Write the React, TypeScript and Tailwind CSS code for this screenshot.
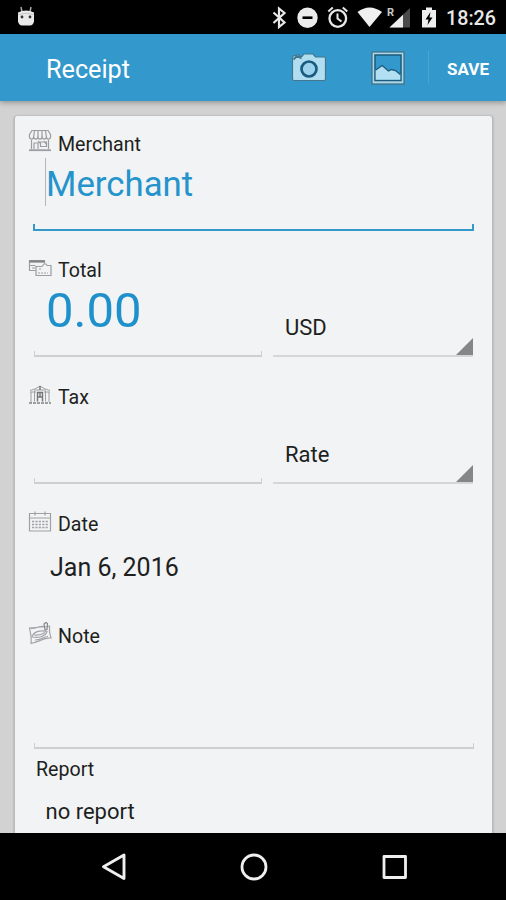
import { ReactNode } from "react";

function StoreIcon() {
  return (
    <svg className="h-6 w-6" viewBox="0 0 24 24" fill="none" stroke="#9b9d9e" strokeWidth="1.2">
      <path d="M4 1.500h16l2.500 4v3a2.200 2.200 0 0 1-4.200 0 2.200 2.200 0 0 1-4.200 0 2.200 2.200 0 0 1-4.200 0 2.200 2.200 0 0 1-4.200 0 2.200 2.200 0 0 1-4.200 0v-3z" />
      <path d="M6.500 2l-1 6.500M10 2v6.500M14 2v6.500M17.500 2l1 6.500M3.500 11v9M20.500 11v9M6 20v-6h4v6M12.500 17.500v-4.500h6v4.500zM10 12l3 3M16 12l2 3" />
      <path d="M1 21.200h22" strokeWidth="1.800" />
    </svg>
  );
}

function CardsIcon() {
  return (
    <svg className="h-6 w-6" viewBox="0 0 24 24" fill="none" stroke="#9c9ea0" strokeWidth="1.200">
      <path d="M7.500 15.500h-6v-10h15v3" />
      <path d="M1.500 6.500h15" stroke="#808283" strokeWidth="2.200" />
      <path d="M1.500 10.500h6M4 13h3" />
      <path d="M8 11.500h6l2-2.500h2l1 1.500h4v10h-15z" />
      <path d="M10 18h10M11 14h3" strokeDasharray="2 1" />
    </svg>
  );
}

function BankIcon() {
  return (
    <svg className="h-6 w-6" viewBox="0 0 24 24" fill="none" stroke="#9c9ea0" strokeWidth="1">
      <path d="M2 8.500l5-1.500 5-3 5 3 5 1.500M2 10h6M16 10h6M3 10v10M6.500 8.500v11M17.500 8.500v11M21 10v10M7 8h10" />
      <path d="M12 4v4M9.500 19.500v-9h5v9M12 10.500v4M9.500 15h5" stroke="#737576" strokeWidth="1.400" />
      <path d="M1 21h22" stroke="#808283" strokeWidth="1.600" strokeDasharray="3 1" />
    </svg>
  );
}

function CalendarIcon() {
  return (
    <svg className="h-6 w-6" viewBox="0 0 24 24" fill="none" stroke="#9fa1a3" strokeWidth="1.200">
      <path d="M1.500 4.500h21v17.500h-21zM1.500 9h21M7 2.500v4M17 2.500v4" />
      <path d="M4 12.500h16M4 15.500h16M4 18.500h16" strokeWidth="1.500" strokeDasharray="2.200 1.200" />
    </svg>
  );
}

function NoteIcon() {
  return (
    <svg className="h-6 w-6" viewBox="0 0 24 24" fill="none" stroke="#a3a5a7" strokeWidth="1.200">
      <path d="M1.500 7c5 1.500 9-2 14-1.500M19.500 5.500l2-.5c-.5 5 0 8 1.500 12-7-.5-12 4-20 5.500 1-5-.5-10-1.500-15.500z" />
      <path d="M4 16c1-5 8-7.500 15-5.500-1.500 4.500-8 7-15 5.500zM6 14c4 .5 8-.5 11-2.500M7 19c5 0 9-3 13-3.500" />
      <path d="M16 3l2-1.500 1.500 1-.5 6-2 .5z" stroke="#858789" />
    </svg>
  );
}

function FieldLabel({ icon, children }: { icon: ReactNode; children: ReactNode }) {
  return (
    <div className="flex h-[31px] gap-[6px] pl-[13px]">
      {icon}
      <span className="text-[19.600px] leading-[31px]">{children}</span>
    </div>
  );
}

function Spinner({ value }: { value: string }) {
  return (
    <div className="flex h-[71px] w-[200px] flex-col justify-end">
      <div className="flex items-end justify-between border-b-2 border-[#d4d6d8]">
        <span className="pb-[9px] pl-3 text-[22px] leading-[36px]">{value}</span>
        <svg className="h-[17px] w-[17px]" viewBox="0 0 17 17">
          <path d="M17 0v17H0z" fill="#858687" />
        </svg>
      </div>
    </div>
  );
}

// flat underline with a short tick going up at both ends
function Underline({ active = false }: { active?: boolean }) {
  return (
    <div
      className={
        active
          ? "h-[7px] border-x-2 border-b-2 border-[#3498c8]"
          : "h-[6px] border-x border-b-2 border-[#cdcfd1]"
      }
    />
  );
}

function StatusBar() {
  return (
    <div className="flex h-[34px] shrink-0 items-center justify-between bg-black pl-[17px] pr-[10px]">
      <svg className="-mt-[3px] h-[22px] w-[18px]" viewBox="0 0 18 22">
        <path d="M4 2l1 5M14 2l-1 5" stroke="#aaa" strokeWidth="1.500" />
        <path d="M1 7.500q8-4 16 0v9q-1 4-4 4H5q-3 0-4-4z" fill="#e9e9e9" />
        <path d="M1 9.500q8-2.500 16 0" stroke="#c5c5c5" fill="none" />
        <circle cx="5" cy="12" r="1.400" fill="#333" />
        <circle cx="13" cy="12" r="1.400" fill="#333" />
      </svg>
      <div className="flex items-center text-white">
        <svg className="h-[24px] w-[166px]" viewBox="0 0 166 24">
          <path d="M2.500 7.500l11 10-5.500 4.500V3.500l5.500 4.500-11 10" fill="none" stroke="#e8e8e8" strokeWidth="2.200" />
          <circle cx="36.500" cy="12.700" r="10.200" fill="#ececec" />
          <path d="M31.500 12.700h10" stroke="#000" strokeWidth="2.600" />
          <circle cx="66.800" cy="13.500" r="8.300" fill="none" stroke="#e8e8e8" strokeWidth="2.300" />
          <path d="M66.500 8.500v5l4 3M57.300 6.500l4.500-4M76.300 6.500l-4.500-4" fill="none" stroke="#e8e8e8" strokeWidth="2" />
          <path d="M86.500 7q12-9 24.500 0L98.500 22z" fill="#f0f0f0" />
          <path d="M139 3L118.500 22.500H139z" fill="#4b4b4b" />
          <path d="M132 9.700L118.500 22.500H132z" fill="#ededed" />
          <path d="M151 5h4V2.500h6V5h4v17.500h-14z" fill="#efefef" />
          <path d="M159.500 7l-5 7.500h3l-1 5.500 5-7.500h-3z" fill="#000" />
          <text x="116" y="10.800" fill="#c8c8c8" fontFamily="Roboto" fontWeight="700" fontSize="11">R</text>
        </svg>
        <span className="ml-[9px] pt-[3px] text-[19.700px] font-medium leading-6 text-[#e8e8e8]">18:26</span>
      </div>
    </div>
  );
}

function ActionBar() {
  return (
    <header className="z-10 flex h-[67px] shrink-0 items-center bg-[#3399cc] pl-[46px] text-white shadow-[0_2px_5px_rgba(0,0,0,0.28)]">
      <h1 className="flex-1 pt-[4px] text-[25.200px] leading-8">Receipt</h1>
      <svg className="h-[32px] w-[38px]" viewBox="0 0 38 32">
        <path
          d="M2.500 6.500L3 4l6-1 1 1.500h2L14 2h9l2.500 3H34q1.500 0 1.500 1.500V27q0 1.500-1.500 1.500H4Q2.500 28.500 2.500 27z"
          fill="#b1ddf1"
          stroke="#43768d"
          strokeWidth="1.200"
        />
        <path d="M3.500 7.500l2.500-2.500h3l2.500 1.500" fill="none" stroke="#43768d" strokeWidth="1.800" />
        <circle cx="19" cy="17" r="7.500" fill="#9bd2ed" stroke="#195c80" strokeWidth="2.700" />
      </svg>
      <svg className="ml-[42px] h-[36px] w-[36px]" viewBox="0 0 36 36">
        <rect x="2" y="2" width="32" height="32" fill="#a9d6e9" stroke="#416c80" strokeWidth="1.200" />
        <rect x="5" y="5" width="26" height="25.500" fill="#3399cc" stroke="#1c597a" strokeWidth="1.500" />
        <path d="M5.700 29.800V20l6.500-4.500 6.300 5.500 3-1.500 4 1 4.800 4v5.300z" fill="#b3dff3" />
        <path d="M5.700 20l6.500-4.500 6.300 5.500 3-1.500 4 1 4.800 4" fill="none" stroke="#1c597a" strokeWidth="1.300" />
      </svg>
      <div className="ml-[22px] h-[33px] w-px bg-[#4ba5d2]" />
      <button className="ml-[18px] mr-[17px] pt-[2px] text-[17px] font-bold leading-6">SAVE</button>
    </header>
  );
}

function NavBar() {
  return (
    <nav className="flex h-[67px] shrink-0 items-center justify-center gap-[112px] bg-black pl-px">
      <svg className="h-[30px] w-[28px]" viewBox="0 0 28 30" fill="none" stroke="#efefef" strokeWidth="2.900" strokeLinejoin="round">
        <path d="M24 3v23.500L3.500 14.750z" />
      </svg>
      <svg className="h-[30px] w-[28px]" viewBox="0 0 28 30" fill="none" stroke="#efefef" strokeWidth="2.800">
        <circle cx="14" cy="15" r="12" />
      </svg>
      <svg className="h-[30px] w-[28px]" viewBox="0 0 28 30" fill="none" stroke="#efefef" strokeWidth="2.800" strokeLinejoin="round">
        <rect x="4" y="4.500" width="21.500" height="21" />
      </svg>
    </nav>
  );
}

export default function App() {
  return (
    <div className="flex h-[900px] w-[506px] flex-col overflow-hidden bg-[#d2d2d2] font-[Roboto,sans-serif] text-[#1e1f20]">
      <StatusBar />
      <ActionBar />

      <main className="min-h-0 flex-1 overflow-hidden pl-[14px] pr-[13px] pt-[15px]">
        <div className="h-[740px] rounded-t-[3px] border-x border-[#bbbcbd] bg-[#f1f3f5] pt-[13px] shadow-[0_0_2px_rgba(0,0,0,0.3)]">
          {/* Merchant */}
          <section>
            <FieldLabel icon={<StoreIcon />}>Merchant</FieldLabel>
            <div className="relative ml-[18px] flex h-[71px] w-[441px] flex-col justify-between">
              <div className="pl-[13px] text-[34.800px] leading-[48px] text-[#2594cb]">Merchant</div>
              <div className="absolute left-[12px] -top-[2px] h-[48px] w-px bg-[#b3b5b7]" />
              <Underline active />
            </div>
          </section>

          {/* Total */}
          <section className="mt-6">
            <FieldLabel icon={<CardsIcon />}>Total</FieldLabel>
            <div className="ml-[19px] flex gap-[11px]">
              <div className="flex h-[71px] w-[228px] flex-col justify-between">
                <div className="pl-3 text-[49px] leading-[50px] text-[#1f91ca]">0.00</div>
                <Underline />
              </div>
              <Spinner value="USD" />
            </div>
          </section>

          {/* Tax */}
          <section className="mt-[25px]">
            <FieldLabel icon={<BankIcon />}>Tax</FieldLabel>
            <div className="ml-[19px] flex gap-[11px]">
              <div className="flex h-[71px] w-[228px] flex-col justify-end">
                <Underline />
              </div>
              <Spinner value="Rate" />
            </div>
          </section>

          {/* Date */}
          <section className="mt-[25px]">
            <FieldLabel icon={<CalendarIcon />}>Date</FieldLabel>
            <div className="pl-[35px] pt-[10px] text-[25px] leading-9">Jan 6, 2016</div>
          </section>

          {/* Note */}
          <section className="mt-[35px]">
            <FieldLabel icon={<NoteIcon />}>Note</FieldLabel>
            <div className="ml-[19px] flex h-[97px] w-[440px] flex-col justify-end">
              <Underline />
            </div>
          </section>

          {/* Report */}
          <section className="pl-[21px] pt-[6px]">
            <div className="text-[19.600px] leading-[30px]">Report</div>
            <div className="pl-[9.500px] pt-[11px] text-[22px] leading-8">no report</div>
          </section>
        </div>
      </main>

      <NavBar />
    </div>
  );
}
